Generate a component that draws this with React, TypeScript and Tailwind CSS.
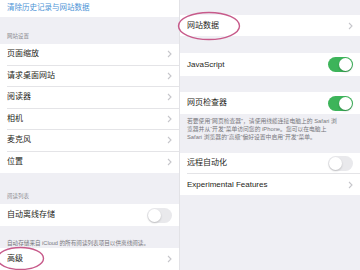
import React from "react"

function Chevron() {
  return (
    <svg width="5" height="8" viewBox="0 0 5 8" className="shrink-0">
      <polyline points="1,1 4,4 1,7" fill="none" stroke="#c6c6cb" strokeWidth="1.1" />
    </svg>
  )
}

function Toggle({ on }: { on: boolean }) {
  return on ? (
    <div className="w-[25px] h-[15px] rounded-full bg-[#3db45a] flex items-center justify-end pr-[1px]">
      <div className="w-[13px] h-[13px] rounded-full bg-white shadow-[0_1px_2px_rgba(0,0,0,0.25)]" />
    </div>
  ) : (
    <div className="w-[25px] h-[15px] rounded-full bg-[#e9e9ec] flex items-center pl-[1px]">
      <div className="w-[13px] h-[13px] rounded-full bg-white shadow-[0_1px_2px_rgba(0,0,0,0.2)]" />
    </div>
  )
}

function Row({
  label,
  h,
  last,
  right,
}: {
  label: string
  h: string
  last?: boolean
  right: React.ReactNode
}) {
  return (
    <div className={`flex bg-white pl-[7px] ${h}`}>
      <div
        className={`flex-1 flex items-center justify-between pr-[7px] ${
          last ? "" : "border-b border-[#e4e4e7]"
        }`}
      >
        <span className="text-[8px] leading-none text-[#1e1e20]">{label}</span>
        {right}
      </div>
    </div>
  )
}

const siteRows = ["页面缩放", "请求桌面网站", "阅读器", "相机", "麦克风", "位置"]

export default function App() {
  return (
    <div className="flex w-[360px] h-[270px] overflow-hidden bg-[#efeff4] font-[Liberation_Sans,Noto_Sans_CJK_SC,sans-serif]">
      {/* Left screen */}
      <div className="relative w-[179px] flex flex-col">
        <div className="h-[17px] bg-white flex items-center pl-[7px] pb-[2px]">
          <span className="text-[7.5px] leading-none text-[#4c93d6]">清除历史记录与网站数据</span>
        </div>
        <div className="h-[27px] flex items-end pl-[7px] pb-[4px]">
          <span className="text-[5.5px] leading-[8px] text-[#8c8c91]">网站设置</span>
        </div>
        {siteRows.map((label, i) => (
          <Row
            key={label}
            label={label}
            h="h-[21.5px]"
            last={i === siteRows.length - 1}
            right={<Chevron />}
          />
        ))}
        <div className="h-[31px] flex items-end pl-[7px] pb-[4px]">
          <span className="text-[5.5px] leading-[8px] text-[#8c8c91]">阅读列表</span>
        </div>
        <Row label="自动离线存储" h="h-[22px]" last right={<Toggle on={false} />} />
        <div className="h-[22px] pl-[7px] pt-[2px]">
          <span className="text-[5.6px] leading-[8px] text-[#77777c] whitespace-nowrap">
            自动存储来自 iCloud 的所有阅读列表项目以供离线阅读。
          </span>
        </div>
        <Row label="高级" h="h-[22px]" last right={<Chevron />} />

        <svg className="absolute left-[-4px] top-[246px]" width="49" height="25" viewBox="0 0 49 25">
          <ellipse cx="24.5" cy="12.5" rx="23" ry="11" fill="none" stroke="#c75a8a" strokeWidth="1.4" />
        </svg>
      </div>

      <div className="w-px bg-[#e2e2e6]" />

      {/* Right screen */}
      <div className="relative w-[180px] flex flex-col">
        <div className="h-[15px]" />
        <Row label="网站数据" h="h-[21px]" last right={<Chevron />} />
        <div className="h-[17px]" />
        <Row label="JavaScript" h="h-[23px]" last right={<Toggle on />} />
        <div className="h-[16px]" />
        <Row label="网页检查器" h="h-[22px]" last right={<Toggle on />} />
        <div className="h-[39px] pl-[7px] pt-[3px] text-[5.8px] leading-[8px] text-[#77777c] whitespace-nowrap">
          <div>若要使用“网页检查器”，请使用线缆连接电脑上的 Safari 浏</div>
          <div>览器并从“开发”菜单访问您的 iPhone。您可以在电脑上</div>
          <div>Safari 浏览器的“高级”偏好设置中启用“开发”菜单。</div>
        </div>
        <Row label="远程自动化" h="h-[21px]" right={<Toggle on={false} />} />
        <Row label="Experimental Features" h="h-[21px]" last right={<Chevron />} />
        <div className="flex-1" />

        <svg className="absolute left-[-3px] top-[11px]" width="64" height="30" viewBox="0 0 64 30">
          <ellipse cx="32" cy="15" rx="30.5" ry="13.5" fill="none" stroke="#c75a8a" strokeWidth="1.4" />
        </svg>
      </div>
    </div>
  )
}
